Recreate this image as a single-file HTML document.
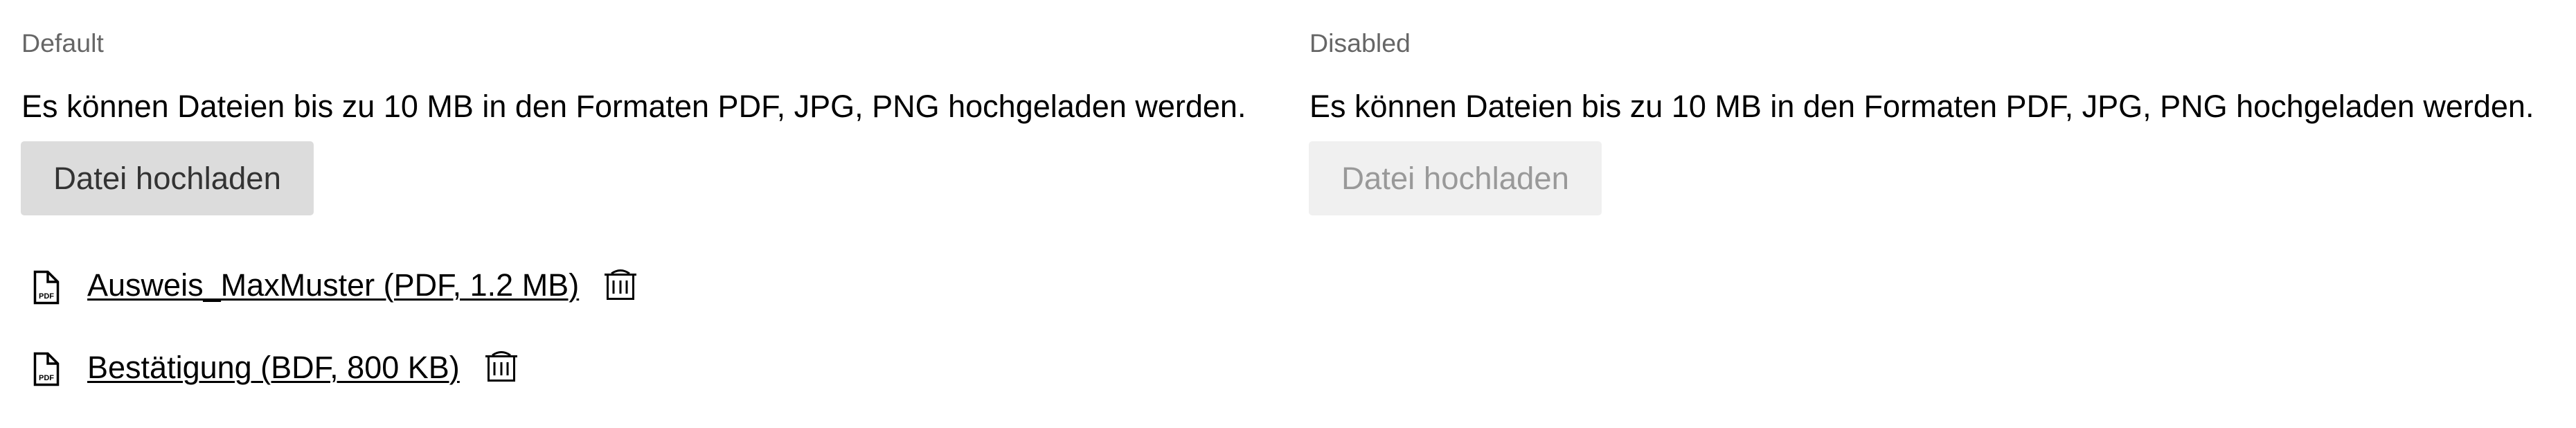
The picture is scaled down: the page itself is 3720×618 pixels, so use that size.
<!DOCTYPE html>
<html><head><meta charset="utf-8"><style>
html,body{margin:0;padding:0;background:#fff;width:3720px;height:618px;overflow:hidden;position:relative;font-family:"Liberation Sans",Arial,sans-serif}
.a{position:absolute;white-space:nowrap;line-height:1}
.lbl{font-size:37.5px;color:#666}
.txt{font-size:45px;color:#000}
.btn{position:absolute;top:204px;width:423px;height:107px;border-radius:5px;font-size:45.5px;line-height:107px;text-align:center}
.link{font-size:45px;color:#000;text-decoration:underline;text-decoration-thickness:3px;text-underline-offset:4px}
svg{position:absolute}
</style></head><body>
<div class="a lbl" style="left:31px;top:44px">Default</div>
<div class="a txt" style="left:31px;top:131px">Es können Dateien bis zu 10 MB in den Formaten PDF, JPG, PNG hochgeladen werden.</div>
<div class="btn" style="left:30px;background:#dcdcdc;color:#333">Datei hochladen</div>

<div class="a lbl" style="left:1901px;top:44px;left:1891px">Disabled</div>
<div class="a txt" style="left:1891px;top:131px">Es können Dateien bis zu 10 MB in den Formaten PDF, JPG, PNG hochgeladen werden.</div>
<div class="btn" style="left:1890px;background:#f0f0f0;color:#999">Datei hochladen</div>

<svg style="left:46px;top:388px" width="42" height="54" viewBox="0 0 42 54">
<path d="M4.5 4.5 H23 L37.5 19 V49.5 H4.5 Z M23 4.5 V19 H37.5" fill="none" stroke="#000" stroke-width="3.5" stroke-linejoin="miter"/>
<text x="21" y="43" font-family="Liberation Sans,Arial,sans-serif" font-weight="bold" font-size="11" text-anchor="middle">PDF</text>
</svg>
<div class="a link" style="left:126px;top:389px">Ausweis_MaxMuster (PDF, 1.2 MB)</div>
<svg style="left:870px;top:388px" width="52" height="46" viewBox="0 0 52 46">
<path d="M3 8.5 H49 M13 7 Q26 -2 39 7 M7.5 9 V43.5 H44.5 V9 M16 17 V36 M26 17 V36 M35 17 V36" fill="none" stroke="#000" stroke-width="3"/>
</svg>

<svg style="left:46px;top:506px" width="42" height="54" viewBox="0 0 42 54">
<path d="M4.5 4.5 H23 L37.5 19 V49.5 H4.5 Z M23 4.5 V19 H37.5" fill="none" stroke="#000" stroke-width="3.5" stroke-linejoin="miter"/>
<text x="21" y="43" font-family="Liberation Sans,Arial,sans-serif" font-weight="bold" font-size="11" text-anchor="middle">PDF</text>
</svg>
<div class="a link" style="left:126px;top:508px">Bestätigung (BDF, 800 KB)</div>
<svg style="left:698px;top:506px" width="52" height="46" viewBox="0 0 52 46">
<path d="M3 8.5 H49 M13 7 Q26 -2 39 7 M7.5 9 V43.5 H44.5 V9 M16 17 V36 M26 17 V36 M35 17 V36" fill="none" stroke="#000" stroke-width="3"/>
</svg>
</body></html>
